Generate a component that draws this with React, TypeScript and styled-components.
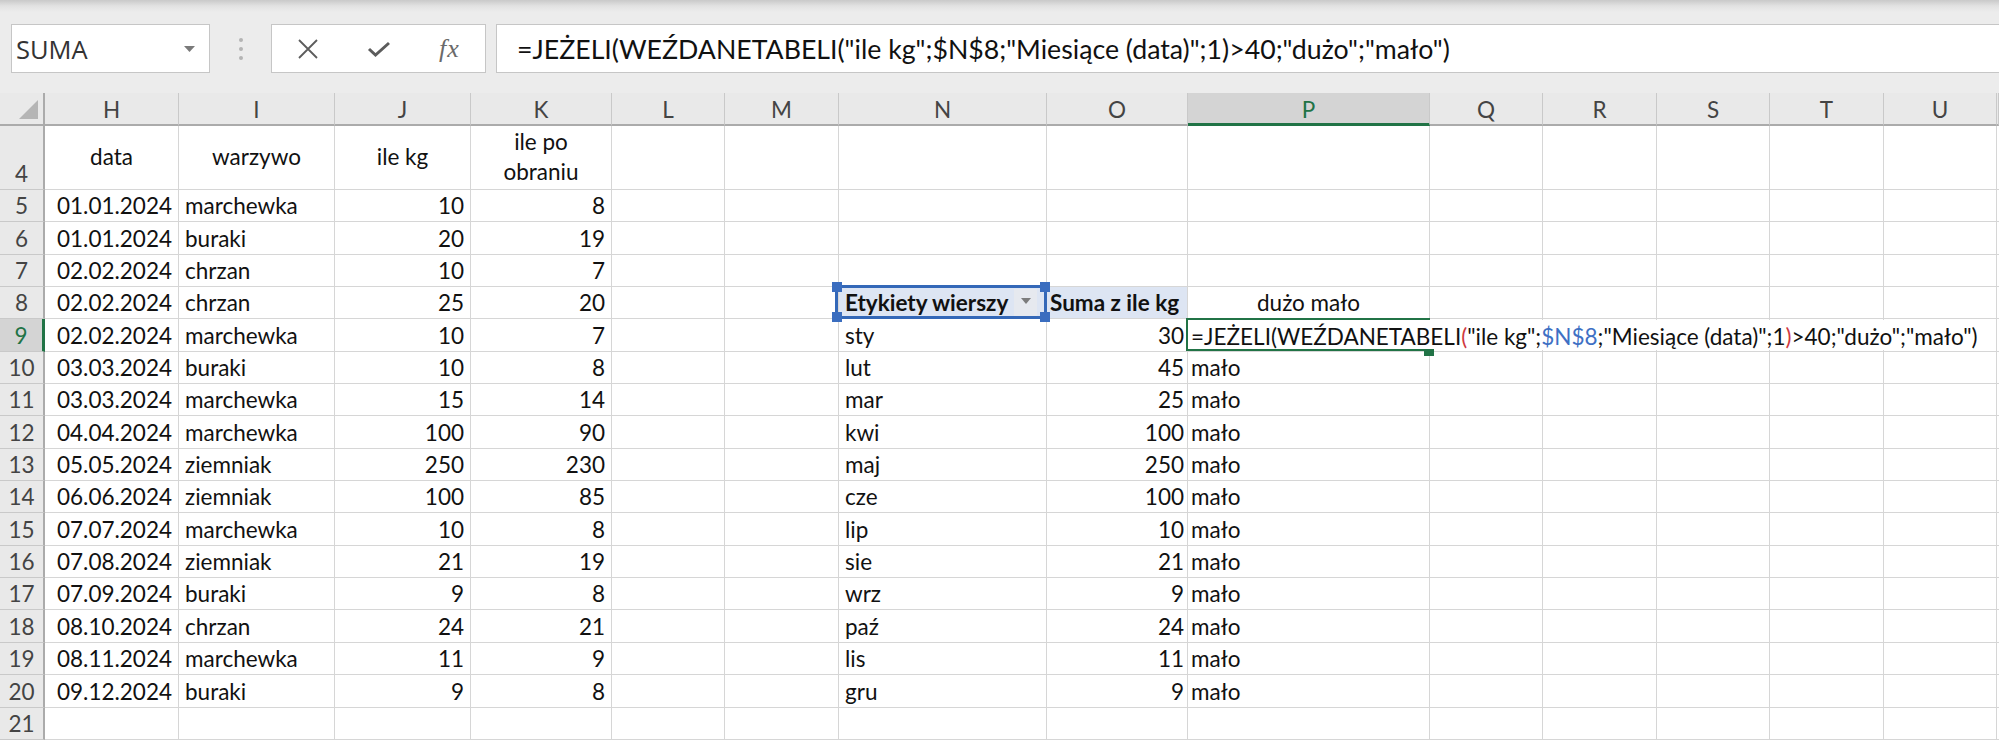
import React, { ReactNode } from "react";
import styled, { createGlobalStyle } from "styled-components";

type Align = "left" | "right" | "center";

const GlobalStyle = createGlobalStyle`
  html, body {
    margin: 0;
    padding: 0;
    background: #ffffff;
  }
  body {
    width: 1999px;
    height: 740px;
    overflow: hidden;
    font-family: Lato, "Liberation Sans", sans-serif;
  }
`;

const COLUMNS = [
  { name: "H", w: 134 },
  { name: "I", w: 156 },
  { name: "J", w: 136 },
  { name: "K", w: 141 },
  { name: "L", w: 113 },
  { name: "M", w: 114 },
  { name: "N", w: 208 },
  { name: "O", w: 141 },
  { name: "P", w: 242 },
  { name: "Q", w: 113 },
  { name: "R", w: 114 },
  { name: "S", w: 113 },
  { name: "T", w: 114 },
  { name: "U", w: 113 },
  { name: "", w: 2 },
];

// dane źródłowe: data, warzywo, ile kg, ile po obraniu
const source: [string, string, number, number][] = [
  ["01.01.2024", "marchewka", 10, 8],
  ["01.01.2024", "buraki", 20, 19],
  ["02.02.2024", "chrzan", 10, 7],
  ["02.02.2024", "chrzan", 25, 20],
  ["02.02.2024", "marchewka", 10, 7],
  ["03.03.2024", "buraki", 10, 8],
  ["03.03.2024", "marchewka", 15, 14],
  ["04.04.2024", "marchewka", 100, 90],
  ["05.05.2024", "ziemniak", 250, 230],
  ["06.06.2024", "ziemniak", 100, 85],
  ["07.07.2024", "marchewka", 10, 8],
  ["07.08.2024", "ziemniak", 21, 19],
  ["07.09.2024", "buraki", 9, 8],
  ["08.10.2024", "chrzan", 24, 21],
  ["08.11.2024", "marchewka", 11, 9],
  ["09.12.2024", "buraki", 9, 8],
];

// tabela przestawna od wiersza 9
const pivot: [string, number][] = [
  ["sty", 30],
  ["lut", 45],
  ["mar", 25],
  ["kwi", 100],
  ["maj", 250],
  ["cze", 100],
  ["lip", 10],
  ["sie", 21],
  ["wrz", 9],
  ["paź", 24],
  ["lis", 11],
  ["gru", 9],
];

const ROWS = Array.from({ length: 18 }, (_, i) => i + 4);

const FormulaParts = () => (
  <>
    =JEŻELI(WEŹDANETABELI<Paren>(</Paren>"ile kg";<Ref>$N$8</Ref>;"Miesiące (data)";1
    <Paren>)</Paren>&gt;40;"dużo";"mało")
  </>
);

const renderCell = (r: number, c: string): ReactNode => {
  const key = `${c}${r}`;
  if (c === "") return <Cell key={key} $edge />;

  if (r === 4) {
    const heads: Record<string, string> = { H: "data", I: "warzywo", J: "ile kg" };
    if (c === "K")
      return (
        <Cell key={key} $align="center" $middle $wrap>
          ile po
          <br />
          obraniu
        </Cell>
      );
    return (
      <Cell key={key} $align="center" $middle>
        {heads[c] ?? ""}
      </Cell>
    );
  }

  const src = source[r - 5];
  if (src) {
    if (c === "H") return <Cell key={key} $align="right">{src[0]}</Cell>;
    if (c === "I") return <Cell key={key}>{src[1]}</Cell>;
    if (c === "J") return <Cell key={key} $align="right">{src[2]}</Cell>;
    if (c === "K") return <Cell key={key} $align="right">{src[3]}</Cell>;
  }

  if (r === 8) {
    if (c === "N")
      return (
        <Cell key={key} $bg="#dde5f3" $bold $raised>
          Etykiety wierszy
          <FilterButton>
            <svg width="10" height="6" viewBox="0 0 10 6">
              <path d="M0 0h10L5 6z" fill="#7c7c7c" />
            </svg>
          </FilterButton>
          <PivotFrame>
            <Handle $x="left" $y="top" />
            <Handle $x="right" $y="top" />
            <Handle $x="left" $y="bottom" />
            <Handle $x="right" $y="bottom" />
          </PivotFrame>
        </Cell>
      );
    if (c === "O")
      return (
        <Cell key={key} $bg="#dde5f3" $bold $tight>
          Suma z ile kg
        </Cell>
      );
    if (c === "P")
      return (
        <Cell key={key} $align="center">
          dużo mało
        </Cell>
      );
  }

  const pv = pivot[r - 9];
  if (pv) {
    if (c === "N") return <Cell key={key}>{pv[0]}</Cell>;
    if (c === "O") return <Cell key={key} $align="right" $tight>{pv[1]}</Cell>;
    if (c === "P") {
      if (r === 9)
        return (
          <Cell key={key} $raised>
            <ActiveFrame />
            <Editor>
              <FormulaParts />
            </Editor>
            <FillHandle />
          </Cell>
        );
      return <Cell key={key} $tight>mało</Cell>;
    }
  }

  return <Cell key={key} />;
};

export default function App() {
  return (
    <>
      <GlobalStyle />
      <Page>
        <Toolbar>
          <NameBox>
            <NameText>SUMA</NameText>
            <svg width="11" height="6" viewBox="0 0 11 6">
              <path d="M0 0h11L5.5 6z" fill="#7a7a7a" />
            </svg>
          </NameBox>
          <Grip>
            <span />
            <span />
            <span />
          </Grip>
          <FxBox>
            <FxButton>
              <svg width="22" height="20" viewBox="0 0 22 20">
                <path d="M2 1l18 18M20 1L2 19" stroke="#5c5c5c" strokeWidth="1.8" fill="none" />
              </svg>
            </FxButton>
            <FxButton>
              <svg width="24" height="16" viewBox="0 0 24 16">
                <path d="M2 8l6.5 6L22 2" stroke="#5c5c5c" strokeWidth="3" fill="none" />
              </svg>
            </FxButton>
            <FxButton>
              <FxLabel>fx</FxLabel>
            </FxButton>
          </FxBox>
          <FormulaBox>
            <FormulaText>=JEŻELI(WEŹDANETABELI("ile kg";$N$8;"Miesiące (data)";1)&gt;40;"dużo";"mało")</FormulaText>
          </FormulaBox>
        </Toolbar>

        <Sheet>
          <Corner>
            <svg width="19" height="19" viewBox="0 0 19 19">
              <path d="M19 0v19H0z" fill="#b5b5b5" />
            </svg>
          </Corner>
          {COLUMNS.map((col) => (
            <ColHead key={`head-${col.name || "edge"}`} $active={col.name === "P"}>
              {col.name}
            </ColHead>
          ))}
          {ROWS.map((r) => (
            <React.Fragment key={r}>
              <RowHead $active={r === 9}>{r}</RowHead>
              {COLUMNS.map((col) => renderCell(r, col.name))}
            </React.Fragment>
          ))}
        </Sheet>
      </Page>
    </>
  );
}

const Page = styled.div`
  width: 1999px;
  height: 740px;
  display: flex;
  flex-direction: column;
  overflow: hidden;
`;

const Toolbar = styled.div`
  height: 93px;
  flex: none;
  box-sizing: border-box;
  padding: 24px 0 0 11px;
  display: flex;
  align-items: flex-start;
  background: linear-gradient(#c9c9c9 0, #e2e2e2 6px, #ececec 12px);
`;

const NameBox = styled.div`
  width: 199px;
  height: 49px;
  box-sizing: border-box;
  border: 1px solid #c6c6c6;
  background: #fff;
  display: flex;
  align-items: center;
  justify-content: space-between;
  padding: 0 14px 0 4px;
`;

const NameText = styled.span`
  font-family: "Open Sans", "Liberation Sans", sans-serif;
  font-size: 25.5px;
  color: #333;
`;

const Grip = styled.div`
  width: 61px;
  display: flex;
  flex-direction: column;
  align-items: center;
  gap: 5px;
  padding-top: 14px;
  span {
    width: 4px;
    height: 4px;
    border-radius: 50%;
    background: #b4b4b4;
  }
`;

const FxBox = styled.div`
  width: 215px;
  height: 49px;
  box-sizing: border-box;
  border: 1px solid #c6c6c6;
  background: #fff;
  display: flex;
`;

const FxButton = styled.div`
  width: 71px;
  display: flex;
  align-items: center;
  justify-content: center;
`;

const FxLabel = styled.span`
  font-family: "Liberation Serif", serif;
  font-style: italic;
  font-size: 26px;
  color: #6a6a6a;
  letter-spacing: 1px;
`;

const FormulaBox = styled.div`
  flex: 1;
  height: 49px;
  margin-left: 10px;
  box-sizing: border-box;
  border: 1px solid #c6c6c6;
  border-right: none;
  background: #fff;
  display: flex;
  align-items: center;
  padding-left: 20px;
`;

const FormulaText = styled.span`
  font-size: 26.7px;
  color: #111;
  white-space: nowrap;
`;

const Sheet = styled.div`
  flex: 1;
  display: grid;
  grid-template-columns: 45px ${COLUMNS.map((c) => `${c.w}px`).join(" ")};
  grid-template-rows: 33px 64px repeat(17, 32.35px);
  background: #fff;
`;

const Corner = styled.div`
  background: #e9e9e9;
  border-right: 2px solid #ababab;
  border-bottom: 2px solid #ababab;
  box-sizing: border-box;
  display: flex;
  align-items: flex-end;
  justify-content: flex-end;
  padding: 0 5px 5px 0;
`;

const ColHead = styled.div<{ $active?: boolean }>`
  box-sizing: border-box;
  display: flex;
  align-items: center;
  justify-content: center;
  background: ${({ $active }) => ($active ? "#d4d4d4" : "#e9e9e9")};
  border-right: 1px solid #c9c9c9;
  border-bottom: ${({ $active }) => ($active ? "3px solid #217346" : "2px solid #ababab")};
  color: ${({ $active }) => ($active ? "#217346" : "#444")};
  font-size: 22.5px;
  padding-top: 2px;
`;

const RowHead = styled.div<{ $active?: boolean }>`
  box-sizing: border-box;
  display: flex;
  align-items: flex-end;
  justify-content: center;
  background: ${({ $active }) => ($active ? "#d4d4d4" : "#e9e9e9")};
  border-right: ${({ $active }) => ($active ? "3px solid #217346" : "2px solid #ababab")};
  border-bottom: 1px solid #c9c9c9;
  color: ${({ $active }) => ($active ? "#217346" : "#444")};
  font-size: 22.5px;
  line-height: 26px;
  padding-bottom: 2px;
`;

const Cell = styled.div<{
  $align?: Align;
  $middle?: boolean;
  $bg?: string;
  $bold?: boolean;
  $raised?: boolean;
  $wrap?: boolean;
  $tight?: boolean;
  $edge?: boolean;
}>`
  position: relative;
  z-index: ${({ $raised }) => ($raised ? 2 : "auto")};
  box-sizing: border-box;
  min-width: 0;
  border-right: ${({ $edge }) => ($edge ? "none" : "1px solid #d6d6d6")};
  border-bottom: 1px solid #d6d6d6;
  background: ${({ $bg }) => $bg ?? "#fff"};
  display: flex;
  align-items: ${({ $middle }) => ($middle ? "center" : "flex-end")};
  justify-content: ${({ $align }) =>
    $align === "right" ? "flex-end" : $align === "center" ? "center" : "flex-start"};
  text-align: ${({ $align }) => $align ?? "left"};
  padding: 0 ${({ $tight }) => ($tight ? "3px" : "6px")} 2px;
  font-size: 22.5px;
  line-height: ${({ $wrap }) => ($wrap ? "30px" : "26px")};
  font-weight: ${({ $bold }) => ($bold ? 700 : 400)};
  color: #111;
  white-space: nowrap;
`;

const FilterButton = styled.div`
  margin-left: auto;
  margin-right: 3px;
  align-self: stretch;
  margin-top: 2px;
  width: 23px;
  background: #e6e9ef;
  display: flex;
  justify-content: center;
  padding-top: 9px;
  box-sizing: border-box;
`;

const PivotFrame = styled.div`
  position: absolute;
  left: -4px;
  top: -2px;
  right: -1px;
  bottom: -1px;
  border: 3px solid #3468b8;
  pointer-events: none;
`;

const Handle = styled.span<{ $x: "left" | "right"; $y: "top" | "bottom" }>`
  position: absolute;
  width: 10px;
  height: 10px;
  background: #3a6dbf;
  ${({ $x }) => ($x === "left" ? "left: -6px;" : "right: -6px;")}
  ${({ $y }) => ($y === "top" ? "top: -6px;" : "bottom: -6px;")}
`;

const ActiveFrame = styled.div`
  position: absolute;
  left: -2px;
  top: -1px;
  width: 244px;
  height: 33px;
  box-sizing: border-box;
  border: 2.5px solid #217346;
  border-right: none;
  z-index: 4;
`;

const Editor = styled.div`
  position: absolute;
  left: 1px;
  top: 1px;
  height: 30px;
  padding: 0 4px 0 2px;
  background: #fff;
  display: flex;
  align-items: flex-end;
  font-size: 22.5px;
  line-height: 26px;
  color: #111;
  white-space: nowrap;
  z-index: 3;
`;

const Paren = styled.span`
  color: #d0393f;
`;

const Ref = styled.span`
  color: #3e70c4;
`;

const FillHandle = styled.span`
  position: absolute;
  left: 236px;
  top: 30px;
  width: 10px;
  height: 7px;
  background: #217346;
  z-index: 5;
`;
